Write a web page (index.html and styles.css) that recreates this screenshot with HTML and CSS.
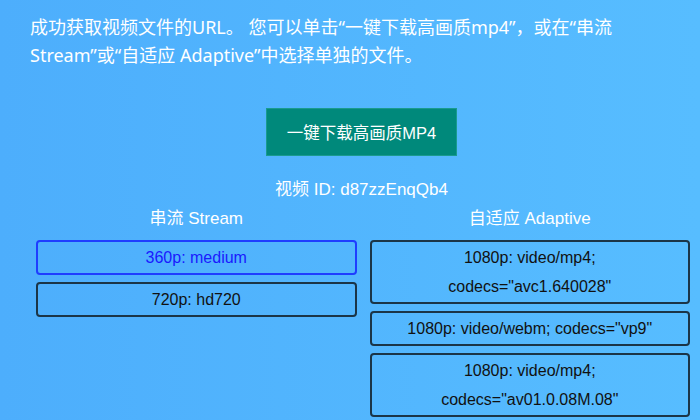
FILE: index.html
```html
<!DOCTYPE html>
<html lang="zh-CN">
<head>
  <meta charset="UTF-8">
  <title>视频下载</title>
  <link rel="stylesheet" href="styles.css">
</head>
<body>
  <div class="page">
    <!-- Intro text -->
    <p class="intro">成功获取视频文件的URL。 您可以单击“一键下载高画质mp4”，或在“串流 Stream”或“自适应 Adaptive”中选择单独的文件。</p>

    <!-- Main download button -->
    <button class="download-btn">一键下载高画质MP4</button>

    <p class="video-id">视频 ID: d87zzEnqQb4</p>

    <!-- Stream / Adaptive lists -->
    <div class="formats">
      <div class="format-col">
        <h3>串流 Stream</h3>
        <button class="format-btn active">360p: medium</button>
        <button class="format-btn">720p: hd720</button>
      </div>
      <div class="format-col">
        <h3>自适应 Adaptive</h3>
        <button class="format-btn">1080p: video/mp4;<br>codecs="avc1.640028"</button>
        <button class="format-btn">1080p: video/webm; codecs="vp9"</button>
        <button class="format-btn">1080p: video/mp4;<br>codecs="av01.0.08M.08"</button>
      </div>
    </div>
  </div>
</body>
</html>
```

FILE: styles.css
```css
/* Global Reset */
* {
  box-sizing: border-box;
  margin: 0;
  padding: 0;
}
body {
  font-family: "Liberation Sans", "Noto Sans CJK SC", sans-serif;
  background: linear-gradient(to right, #4daefc, #57bdff);
  color: #fff;
  min-height: 420px;
}

/* content sits a bit right of the window centre */
.page {
  padding: 13px 0 0 23px;
  text-align: center;
}

/* Intro paragraph */
.intro {
  padding: 0 40px 0 7px;
  font-family: "Noto Sans", "Noto Sans CJK SC", sans-serif;
  font-size: 18px;
  line-height: 28px;
  text-align: left;
}

/* Big teal button */
.download-btn {
  display: block;
  width: 191px;
  height: 48px;
  margin: 39px auto 0;
  background-color: #00897b;
  border: 1px solid #1a9a8e;
  color: #fff;
  font-family: "Liberation Sans", "Noto Sans CJK SC", sans-serif;
  font-size: 16.5px;
  cursor: pointer;
}

.video-id {
  margin-top: 24px;
  font-size: 17px;
  line-height: 20px;
}

/* Two columns of format buttons */
.formats {
  display: grid;
  grid-template-columns: 1fr 1fr;
  gap: 13px;
  padding: 0 10px 0 13px;
  margin-top: 9px;
}
.format-col {
  display: flex;
  flex-direction: column;
  gap: 7px;
}
.format-col h3 {
  font-size: 17px;
  font-weight: normal;
  line-height: 20px;
  margin-bottom: 4px;
}

.format-btn {
  background: transparent;
  border: 2px solid #1b3547;
  border-radius: 4px;
  padding: 1px 6px;
  color: #111;
  font-family: "Liberation Sans", sans-serif;
  font-size: 16px;
  line-height: 29px;
  cursor: pointer;
}
.format-btn.active {
  border-color: #1f3dff;
  color: #1a1aff;
}
```
